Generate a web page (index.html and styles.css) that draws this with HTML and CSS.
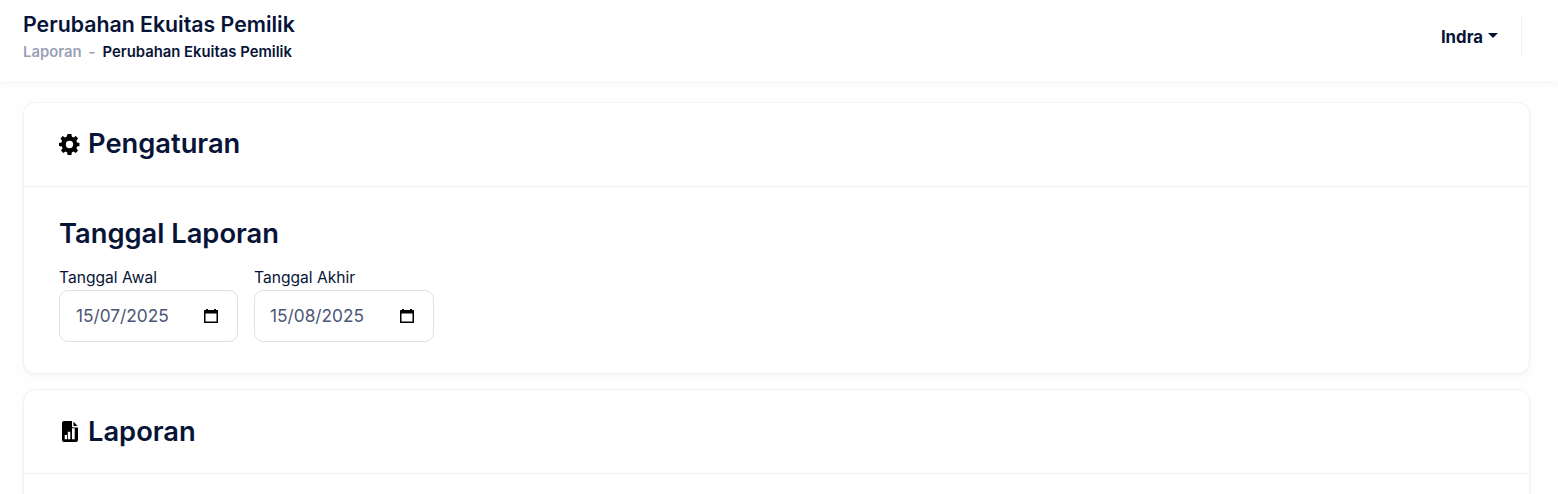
FILE: index.html
```html
<!DOCTYPE html>
<html lang="id">
<head>
  <meta charset="UTF-8" />
  <meta name="viewport" content="width=device-width, initial-scale=1.0"/>
  <title>Perubahan Ekuitas Pemilik</title>
  <link rel="stylesheet" href="styles.css">
</head>
<body>
  <header class="topbar">
    <div class="page-heading">
      <h1>Perubahan Ekuitas Pemilik</h1>
      <div class="breadcrumb">
        <span class="crumb-muted">Laporan</span>
        <span class="crumb-sep">-</span>
        <span class="crumb-current">Perubahan Ekuitas Pemilik</span>
      </div>
    </div>
    <div class="user-area">
      <div class="user-menu">Indra <span class="caret"></span></div>
      <div class="user-divider"></div>
    </div>
  </header>

  <main class="content">
    <section class="card">
      <div class="card-header card-header-settings">
        <h2>
          <svg class="card-icon" viewBox="0 0 20 20" aria-hidden="true">
            <path fill-rule="evenodd" d="M8.200 0h3.600l.5 2.600 1.500.7 2.200-1.400 2.100 2.400-1.500 2.100.6 1.600 2.300.5v3l-2.300.5-.6 1.600 1.500 2.100-2.100 2.400-2.200-1.400-1.500.7-.5 2.600H8.200l-.5-2.600-1.500-.7-2.200 1.400-2.100-2.400 1.500-2.100-.6-1.600L0 11.500v-3l2.300-.5.6-1.600L1.400 4.300l2.100-2.400 2.200 1.400 1.500-.7zM10 6.500a3.500 3.500 0 1 0 0 7 3.500 3.500 0 0 0 0-7z"/>
          </svg>
          Pengaturan
        </h2>
      </div>
      <div class="card-body">
        <h3>Tanggal Laporan</h3>
        <div class="date-row">
          <div class="date-field">
            <label>Tanggal Awal</label>
            <div class="date-input">
              <span>15/07/2025</span>
              <svg class="calendar" viewBox="0 0 16 16" aria-hidden="true">
                <path fill-rule="evenodd" d="M3 1h2v1h6V1h2v1h1.500a.5.5 0 0 1 .5.5v12a.5.5 0 0 1-.5.5h-13a.5.5 0 0 1-.5-.5v-12a.5.5 0 0 1 .5-.5H3zM2.500 5.500v8h11v-8z"/>
              </svg>
            </div>
          </div>
          <div class="date-field">
            <label>Tanggal Akhir</label>
            <div class="date-input date-input-wide">
              <span>15/08/2025</span>
              <svg class="calendar" viewBox="0 0 16 16" aria-hidden="true">
                <path fill-rule="evenodd" d="M3 1h2v1h6V1h2v1h1.500a.5.5 0 0 1 .5.5v12a.5.5 0 0 1-.5.5h-13a.5.5 0 0 1-.5-.5v-12a.5.5 0 0 1 .5-.5H3zM2.500 5.500v8h11v-8z"/>
              </svg>
            </div>
          </div>
        </div>
      </div>
    </section>

    <section class="card">
      <div class="card-header">
        <h2>
          <svg class="card-icon" viewBox="-3 0 21 21" aria-hidden="true">
            <path fill-rule="evenodd" d="M2 0h8v5a1.500 1.500 0 0 0 1.500 1.500H16V19a2 2 0 0 1-2 2H2a2 2 0 0 1-2-2V2a2 2 0 0 1 2-2zM11.500.5l4 4.500h-4zM2.700 14v4.300H5V14zM5.800 10.700v7.600h2.500v-7.600zM10 7.300v11h2.700v-11z"/>
          </svg>
          Laporan
        </h2>
      </div>
      <div class="card-body"></div>
    </section>
  </main>
</body>
</html>
```

FILE: styles.css
```css
html, body {
  height: 100%;
}

body {
  margin: 0;
  overflow: hidden;
  background-color: #fefefe;
  color: #071437;
  font-family: 'Inter', sans-serif;
}

.topbar {
  height: 81px;
  box-sizing: border-box;
  background-color: #fff;
  box-shadow: 0 2px 8px rgba(0,0,0,0.04);
  display: flex;
  justify-content: space-between;
  align-items: center;
  padding: 0 36px 9px 23px;
}

.page-heading {
  margin-bottom: 1px;
}

.page-heading h1 {
  margin: 0 0 6px;
  font-size: 21.3px;
  line-height: 26px;
  font-weight: 600;
}

.breadcrumb {
  display: flex;
  gap: 7px;
  font-size: 14.85px;
  line-height: 18px;
  font-weight: 600;
}

.crumb-muted,
.crumb-sep {
  color: #99a1b7;
}

.user-area {
  display: flex;
  align-items: center;
  gap: 23px;
}

.user-menu {
  display: flex;
  align-items: center;
  gap: 5px;
  padding-top: 2px;
  font-size: 16.8px;
  font-weight: 700;
}

.caret {
  width: 0;
  height: 0;
  margin-top: -3px;
  border-left: 5px solid transparent;
  border-right: 5px solid transparent;
  border-top: 5px solid #071437;
}

.user-divider {
  width: 1px;
  height: 40px;
  background-color: #eeeff3;
}

.content {
  padding: 21px 28px 0 23px;
  display: flex;
  flex-direction: column;
  gap: 15px;
}

.card {
  background-color: #fff;
  border: 1px solid #f1f1f4;
  border-radius: 12px;
  box-shadow: 0 3px 4px rgba(0,0,0,0.03);
}

.card-header {
  height: 84px;
  box-sizing: border-box;
  padding: 0 35px;
  display: flex;
  align-items: center;
  border-bottom: 1px solid #f1f1f4;
}

.card-header-settings {
  padding-bottom: 2px;
}

.card-header-settings .card-icon {
  margin-top: 2px;
}

.card-header h2 {
  margin: 0;
  display: flex;
  align-items: center;
  gap: 8px;
  font-size: 27.3px;
  font-weight: 600;
}

.card-icon {
  width: 21px;
  height: 21px;
  fill: #000;
}

.card-body {
  padding: 30px 35px 31px;
}

.card-body h3 {
  margin: 0 0 18px;
  font-size: 27.3px;
  line-height: 33px;
  font-weight: 600;
}

.date-row {
  display: flex;
  gap: 16px;
}

label {
  display: block;
  font-size: 15.6px;
  line-height: 19px;
  margin-bottom: 3px;
}

.date-input {
  width: 179px;
  height: 52px;
  box-sizing: border-box;
  padding: 0 18px 0 16px;
  display: flex;
  align-items: center;
  justify-content: space-between;
  border: 1px solid #dbdfe9;
  border-radius: 9px;
  font-size: 17.3px;
  color: #4b5675;
}

.date-input span {
  margin-top: -1px;
}

.date-input-wide {
  width: 180px;
  padding-left: 15px;
}

.calendar {
  width: 16px;
  height: 16px;
  fill: #000;
}
```
